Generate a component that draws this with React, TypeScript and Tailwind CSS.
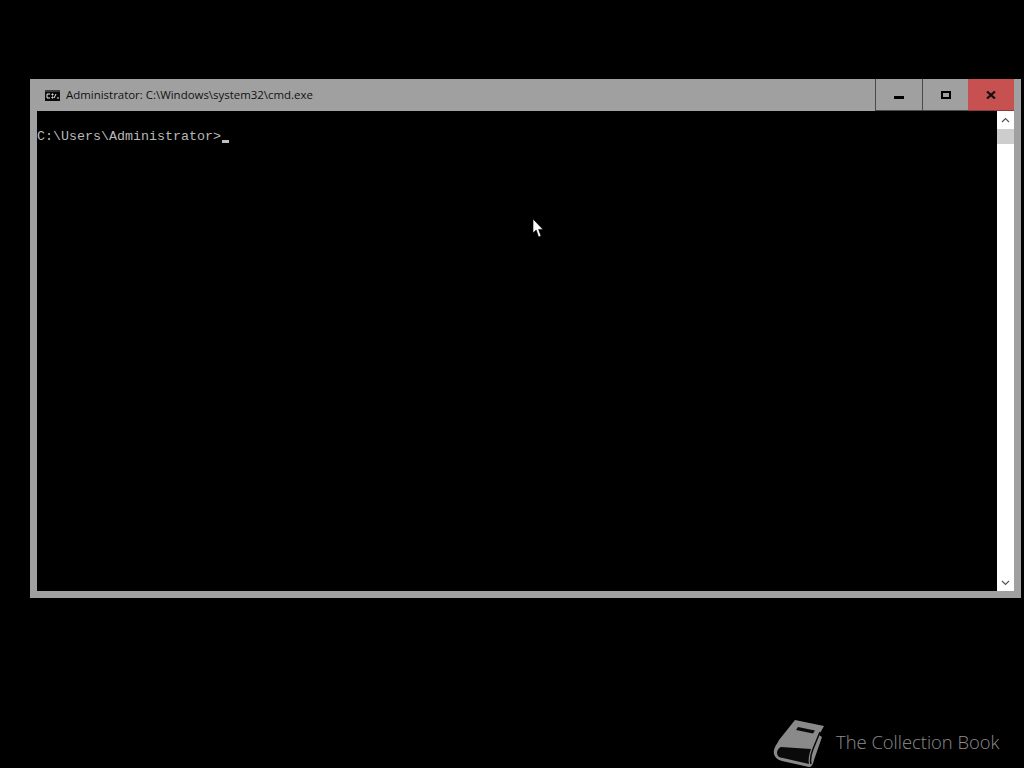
export default function App() {
  return (
    <div className="relative h-[768px] w-[1024px] overflow-hidden bg-black pl-[30px] pt-[79px]">
      <div className="flex h-[519px] w-[991px] flex-col bg-[#a0a0a0]">
        <div className="flex h-[32px] shrink-0 items-stretch">
          <div className="flex flex-1 items-center pl-[15px]">
            <svg width="15" height="11" viewBox="0 0 15 11" className="shrink-0">
              <rect width="15" height="11" fill="#0a0a0a" />
              <rect x="0" y="0" width="15" height="2" fill="#3a3a3a" />
              <path d="M2 4h3M2 4v4M2 8h3M7 4h1v1H7zM7 7h1v1H7zM9 8l2-4M12 8h2" stroke="#e8e8e8" strokeWidth="1" fill="none" />
            </svg>
            <span className="ml-[6px] whitespace-nowrap font-['Open_Sans',sans-serif] text-[11.45px] text-[#111]">
              Administrator: C:\Windows\system32\cmd.exe
            </span>
          </div>
          <div className="flex w-[47px] items-center justify-center border-b border-l border-[#4a4a4a]">
            <div className="mt-[6px] h-[3px] w-[10px] bg-black" />
          </div>
          <div className="flex w-[46px] items-center justify-center border-b border-l border-[#4a4a4a]">
            <div className="h-[8px] w-[10px] border-2 border-black" />
          </div>
          <div className="mr-[7px] flex w-[46px] items-center justify-center border-b border-[#8a3c3c] bg-[#c75050]">
            <svg width="10" height="8" viewBox="0 0 10 8">
              <path d="M1 0.5L9 7.5M9 0.5L1 7.5" stroke="#111" strokeWidth="2.2" />
            </svg>
          </div>
        </div>
        <div className="mx-[7px] flex h-[480px] items-stretch">
          <div className="flex-1 bg-black pt-[17px] font-['Liberation_Mono',monospace] text-[13.33px] leading-[16px] text-[#b8b8b8]">
            <div className="flex items-end">
              <span className="relative top-[1px]">C:\Users\Administrator&gt;</span>
              <span className="mb-[1px] ml-[1px] h-[3px] w-[7px] bg-[#c0c0c0]" />
            </div>
          </div>
          <div className="flex w-[17px] flex-col bg-white">
            <div className="flex h-[18px] items-center justify-center">
              <svg width="9" height="6" viewBox="0 0 9 6">
                <path d="M1 5L4.5 1.5L8 5" stroke="#555" strokeWidth="1.2" fill="none" />
              </svg>
            </div>
            <div className="h-[15px] bg-[#cdcdcd]" />
            <div className="flex-1" />
            <div className="flex h-[17px] items-center justify-center">
              <svg width="9" height="6" viewBox="0 0 9 6">
                <path d="M1 1L4.5 4.5L8 1" stroke="#555" strokeWidth="1.2" fill="none" />
              </svg>
            </div>
          </div>
        </div>
      </div>

      <svg width="12" height="20" viewBox="0 0 12 20" className="absolute left-[532px] top-[218px]">
        <path d="M1 1V15L4.2 12L6.6 19L9 18L6.6 11.4H11Z" fill="#fff" stroke="#000" strokeWidth="0.6" />
      </svg>

      <div className="absolute left-[773px] top-[718px] flex items-center">
        <svg width="52" height="50" viewBox="0 0 52 50">
          <path d="M22 2L51 8L46 17L49 19L41 42C40 46 39 49 36 49L9 43C2 41 0 36 1 32C2 28 4 26 6 22Z" fill="#8a8a8a" />
          <path d="M8 29C4 31 3 35 5 38C6 39 8 40 10 40L36 46C35 42 36 36 38 31Z" fill="#0a0a0a" />
          <path d="M47 14L40 31C38 36 37 42 38 46" fill="none" stroke="#0a0a0a" strokeWidth="1.5" />
          <path d="M25 9L42 12.5L40 15.5L23 12Z" fill="#0a0a0a" />
        </svg>
        <span className="ml-[11px] mb-[2px] whitespace-nowrap font-['Open_Sans',sans-serif] text-[18.4px] font-light text-[#8c8c8c]">
          The Collection Book
        </span>
      </div>
    </div>
  );
}
